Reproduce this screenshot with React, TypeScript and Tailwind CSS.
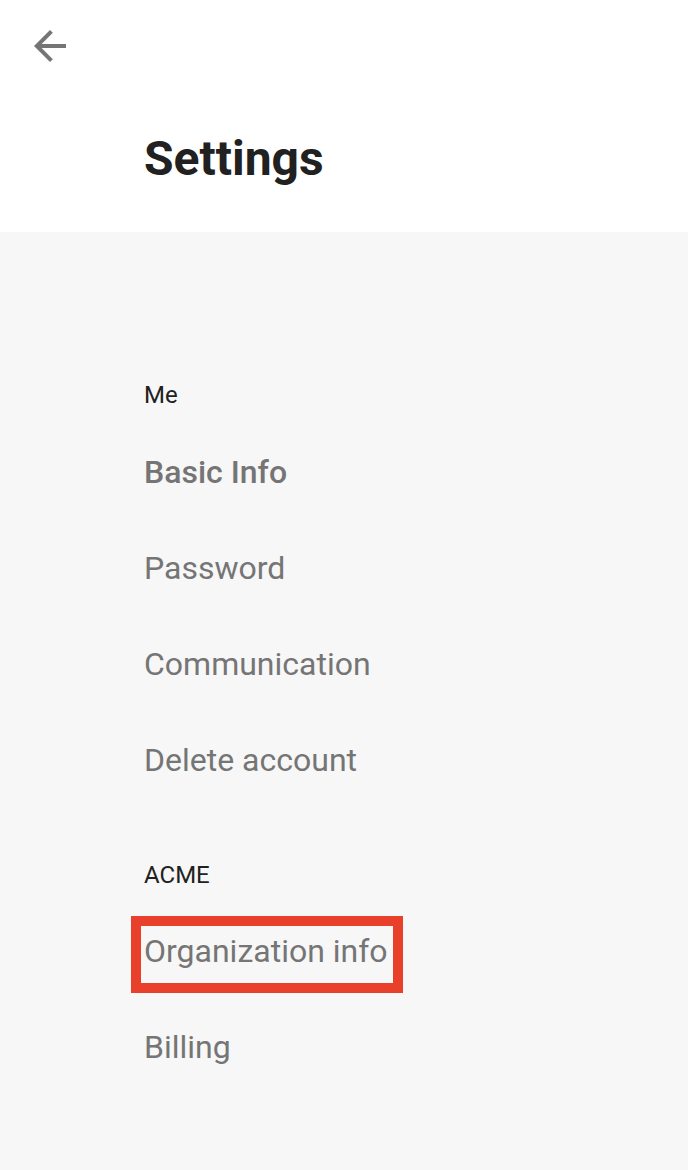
import React from "react";

const Row = ({ label, bold = false, boxed = false }: { label: string; bold?: boolean; boxed?: boolean }) => (
  <div className="relative flex h-[96px] items-center">
    <span className={`text-[32px] leading-none text-[#757575] ${bold ? "font-medium" : "font-normal"}`}>{label}</span>
    {boxed && (
      <div className="pointer-events-none absolute left-[-13px] top-[13px] h-[77px] w-[272px] border-[10px] border-[#e8402a]" />
    )}
  </div>
);

export default function App() {
  return (
    <div className="min-h-[1170px] w-full bg-[#f7f7f7]" style={{ fontFamily: "Roboto, 'Noto Sans', sans-serif" }}>
      <header className="relative h-[232px] bg-white">
        <button className="absolute left-[26px] top-[22px] h-[48px] w-[48px] text-[#757575]" aria-label="Back">
          <svg viewBox="0 0 24 24" width="48" height="48" fill="currentColor">
            <path d="M20 11H7.83l5.59-5.59L12 4l-8 8 8 8 1.41-1.41L7.83 13H20v-2z" />
          </svg>
        </button>
        <div className="pl-[144px] pt-[135px]">
          <h1 className="text-[48px] font-bold leading-none text-[#212121]">Settings</h1>
        </div>
      </header>
      <div className="pl-[144px] pt-[139px] pb-[75px]">
        <div className="flex h-[48px] items-center text-[24px] leading-none text-[#212121]">Me</div>
        <div className="mt-[5px]">
          <Row label="Basic Info" bold />
          <Row label="Password" />
          <Row label="Communication" />
          <Row label="Delete account" />
        </div>
        <div className="mt-[43px] flex h-[48px] items-center text-[24px] leading-none text-[#212121]">ACME</div>
        <div className="mt-[4px]">
          <Row label="Organization info" boxed />
          <Row label="Billing" />
        </div>
      </div>
    </div>
  );
}
